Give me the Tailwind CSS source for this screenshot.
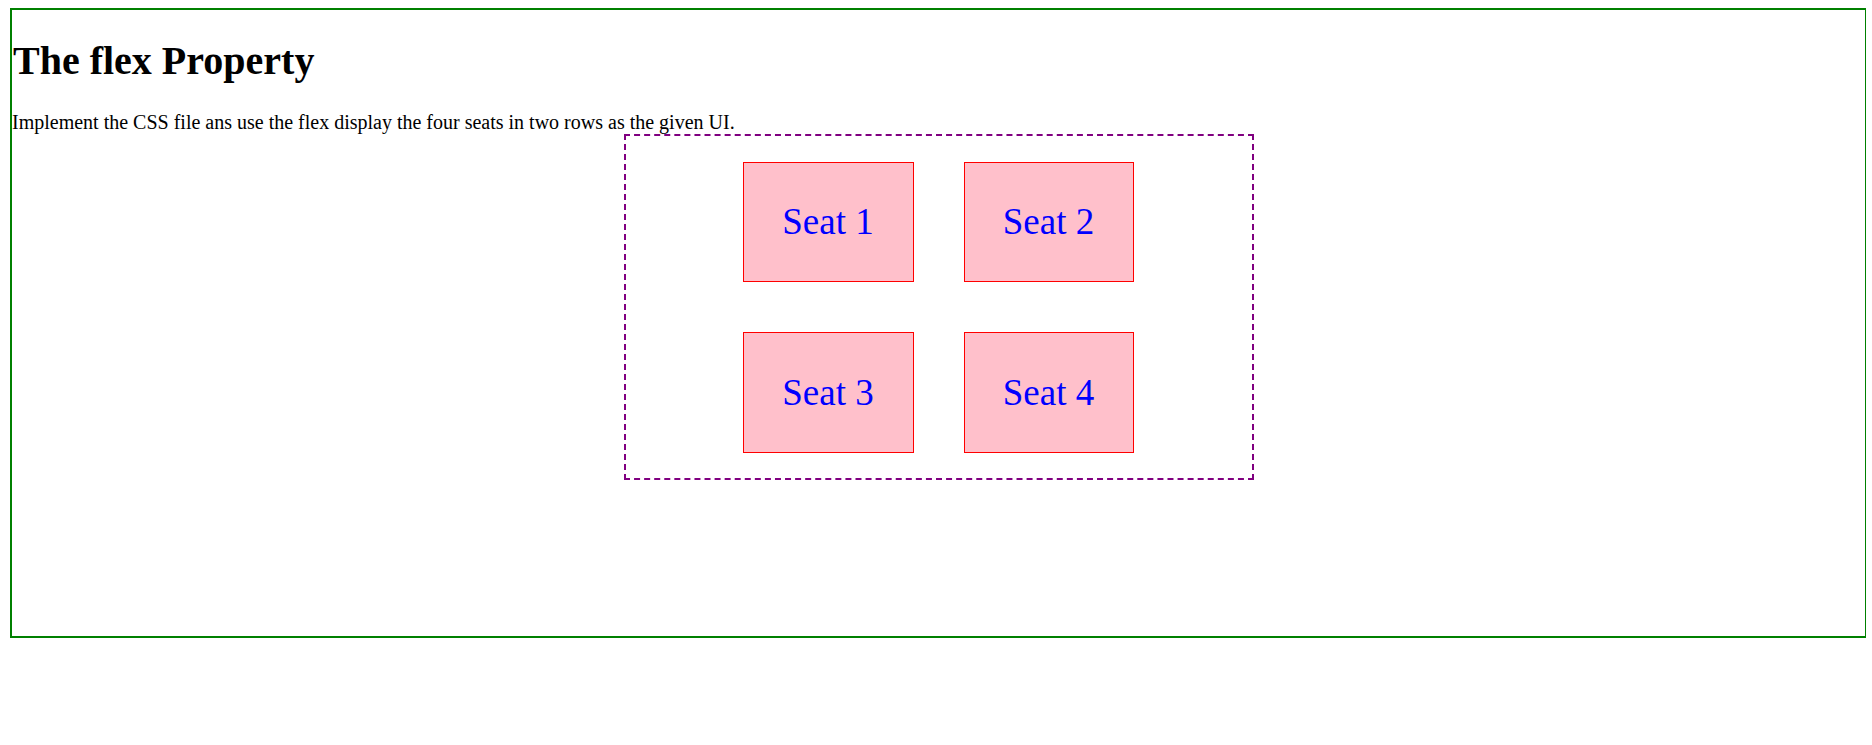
<!DOCTYPE html>
<html lang="en">
<head>
<meta charset="utf-8">
<title>The flex Property</title>
<script src="https://cdn.jsdelivr.net/npm/@tailwindcss/browser@4"></script>
</head>
<body class="bg-white text-black font-['Liberation_Serif',serif]">
<main class="ml-[10px] mr-[6px] mt-2 min-h-[630px] border-2 border-r border-[#008000]">
  <h1 class="mt-7 pl-px text-[40px] leading-[46px] font-bold">The flex Property</h1>
  <p class="mt-[27px] text-xl leading-[23px]">Implement the CSS file ans use the flex display the four seats in two rows as the given UI.</p>
  <div class="flex justify-center pl-px">
    <div class="grid w-[630px] max-w-full grid-cols-[171px_170px] grid-rows-[120px_121px] justify-center gap-[50px] border-2 border-dashed border-[#800080] pt-[26px] pr-[2px] pb-[25px] text-[37px] leading-none text-[#0000ff]">
      <div class="flex items-center justify-center border border-[#ff0000] bg-[#ffc0cb] pb-px">Seat 1</div>
      <div class="flex items-center justify-center border border-[#ff0000] bg-[#ffc0cb] pb-px">Seat 2</div>
      <div class="flex items-center justify-center border border-[#ff0000] bg-[#ffc0cb] pb-px">Seat 3</div>
      <div class="flex items-center justify-center border border-[#ff0000] bg-[#ffc0cb] pb-px">Seat 4</div>
    </div>
  </div>
</main>
</body>
</html>
